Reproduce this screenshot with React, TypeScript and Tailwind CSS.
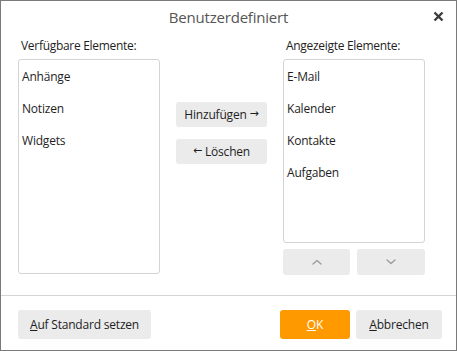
import React from "react";

const font = { fontFamily: '"Open Sans", "Noto Sans", Arial, sans-serif' };
const arrowFont = { fontFamily: '"DejaVu Sans", sans-serif' };

function Chevron({ up }: { up?: boolean }) {
  return (
    <svg width="10" height="6" viewBox="0 0 10 6" fill="none">
      <path
        d={up ? "M1 5 L5 1.5 L9 5" : "M1 1 L5 4.5 L9 1"}
        stroke="#9a9a9a"
        strokeWidth="1.3"
        strokeLinecap="round"
        strokeLinejoin="round"
      />
    </svg>
  );
}

export default function App() {
  const left = ["Anhänge", "Notizen", "Widgets"];
  const right = ["E-Mail", "Kalender", "Kontakte", "Aufgaben"];
  return (
    <div
      style={font}
      className="w-[457px] h-[351px] border border-[#7a7a7a] bg-white flex flex-col text-[12px] text-[#1e1e1e] overflow-hidden"
    >
      <div className="h-[32px] relative flex items-center justify-center">
        <span className="text-[15px] text-[#555] leading-none tracking-[-0.2px]">Benutzerdefiniert</span>
        <svg
          className="absolute left-[432px] top-[10px]"
          width="11"
          height="11"
          viewBox="0 0 11 11"
        >
          <path d="M1.5 1.5 L9.5 9.5 M9.5 1.5 L1.5 9.5" stroke="#3c3c3c" strokeWidth="2.4" />
        </svg>
      </div>
      <div className="flex pl-[17px] pt-[5px] pb-[20px]">
        <div className="w-[142px] flex flex-col">
          <div className="h-[16px] leading-[16px] mb-[5px] pl-[3px] tracking-[-0.3px]">Verfügbare Elemente:</div>
          <div className="h-[215px] border border-[#d4d4d4] rounded-[3px] flex flex-col pt-[1px]">
            {left.map((t) => (
              <div key={t} className="h-[32px] flex items-center pl-[3px] tracking-[-0.2px]">
                {t}
              </div>
            ))}
          </div>
        </div>
        <div className="w-[123px] flex flex-col items-center pt-[64px] gap-[12px]">
          <button className="w-[91px] h-[25px] bg-[#ebebeb] rounded-[3px] text-[12px] tracking-[-0.2px] flex items-center justify-center gap-[3px]">
            <span>Hinzufügen</span>
            <span style={arrowFont} className="text-[11px]">→</span>
          </button>
          <button className="w-[91px] h-[25px] bg-[#ebebeb] rounded-[3px] text-[12px] tracking-[-0.2px] flex items-center justify-center gap-[3px]">
            <span style={arrowFont} className="text-[11px]">←</span>
            <span>Löschen</span>
          </button>
        </div>
        <div className="w-[142px] flex flex-col">
          <div className="h-[16px] leading-[16px] mb-[5px] pl-[3px] tracking-[-0.3px]">Angezeigte Elemente:</div>
          <div className="h-[184px] border border-[#d4d4d4] rounded-[3px] flex flex-col pt-[1px]">
            {right.map((t) => (
              <div key={t} className="h-[32px] flex items-center pl-[3px] tracking-[-0.2px]">
                {t}
              </div>
            ))}
          </div>
          <div className="flex gap-[7px] mt-[6px]">
            <button className="w-[67px] h-[26px] bg-[#ebebeb] rounded-[3px] flex items-center justify-center">
              <Chevron up />
            </button>
            <button className="w-[68px] h-[26px] bg-[#ebebeb] rounded-[3px] flex items-center justify-center">
              <Chevron />
            </button>
          </div>
        </div>
      </div>
      <div className="border-t border-[#d4d4d4] flex items-start pt-[14px] pl-[17px] pr-[14px]">
        <button className="w-[133px] h-[29px] bg-[#ebebeb] rounded-[3px] text-[12px] tracking-[-0.2px]">
          <u>A</u>uf Standard setzen
        </button>
        <div className="flex-1" />
        <button className="w-[70px] h-[29px] bg-[#ff9900] text-white rounded-[3px] text-[12px]">
          <u>O</u>K
        </button>
        <button className="w-[86px] h-[29px] bg-[#ebebeb] rounded-[3px] text-[12px] ml-[6px] tracking-[-0.2px]">
          <u>A</u>bbrechen
        </button>
      </div>
    </div>
  );
}
